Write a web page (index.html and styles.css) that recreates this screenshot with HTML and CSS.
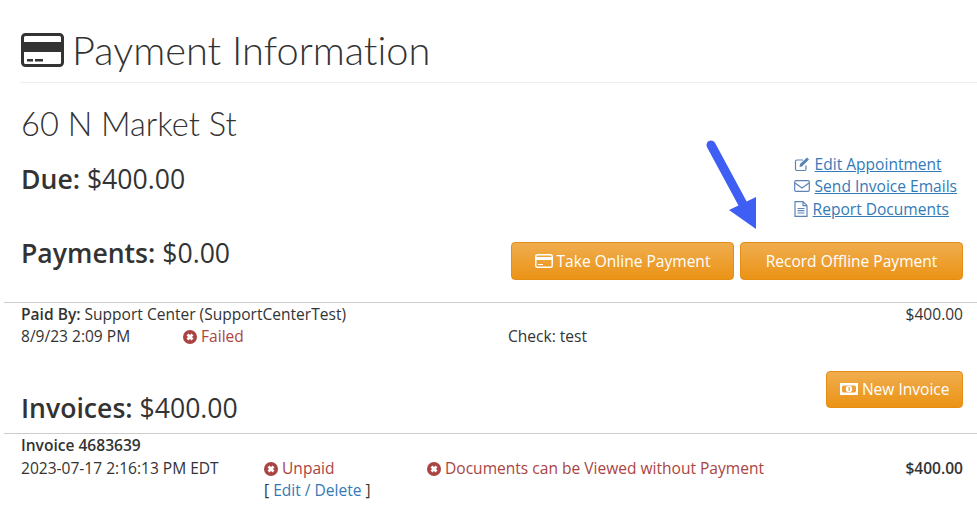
FILE: index.html
```html
<!DOCTYPE html>
<html lang="en">
<head>
    <meta charset="UTF-8">
    <title>Payment Information</title>
    <link rel="stylesheet" href="styles.css">
</head>
<body>
    <div class="page">
        <h1 class="page-title">
            <svg class="title-icon" width="43" height="34" viewBox="0 0 43 34">
                <rect x="1.500" y="1.500" width="40" height="31" rx="3" fill="#fff" stroke="#333" stroke-width="3"/>
                <rect x="2" y="9" width="39" height="10" fill="#333"/>
                <rect x="6" y="26" width="6" height="2.500" fill="#333"/>
                <rect x="14" y="26" width="8" height="2.500" fill="#333"/>
            </svg>
            Payment Information
        </h1>

        <h2 class="address">60 N Market St</h2>

        <div class="summary">
            <div class="totals">
                <h3 class="due"><b>Due:</b> $400.00</h3>
                <h3 class="payments"><b>Payments:</b> $0.00</h3>
            </div>
            <div class="actions">
                <ul class="links">
                    <li>
                        <svg class="link-icon" width="16" height="16" viewBox="0 0 16 16">
                            <path d="M12 9.500V13a1.500 1.500 0 0 1-1.500 1.500H3A1.500 1.500 0 0 1 1.500 13V5.500A1.500 1.500 0 0 1 3 4h6" fill="none" stroke="#5b84b5" stroke-width="1.200"/>
                            <path d="M6 8l7-6.500 2 2L8 10.500l-2.500.5z" fill="#5b84b5"/>
                        </svg>
                        <a href="#">Edit Appointment</a>
                    </li>
                    <li>
                        <svg class="link-icon" width="16" height="16" viewBox="0 0 16 16">
                            <rect x="0.700" y="2.700" width="14.600" height="10.600" rx="1.300" fill="none" stroke="#5b84b5" stroke-width="1.200"/>
                            <path d="M1 5l7 5 7-5" fill="none" stroke="#5b84b5" stroke-width="1.200"/>
                        </svg>
                        <a href="#">Send Invoice Emails</a>
                    </li>
                    <li class="tight">
                        <svg class="link-icon" width="14" height="16" viewBox="0 0 14 16">
                            <path d="M1 .7h8l4 4v10.600H1z M9 .7v4h4" fill="none" stroke="#5b84b5" stroke-width="1.200"/>
                            <path d="M3.500 7.500h7M3.500 9.700h7M3.500 12h7" fill="none" stroke="#5b84b5" stroke-width="1.200"/>
                        </svg>
                        <a href="#">Report Documents</a>
                    </li>
                </ul>
                <div class="buttons">
                    <button class="btn wide">
                        <svg class="btn-icon" width="18" height="14" viewBox="0 0 18 14">
                            <rect x="0.800" y="0.800" width="16.400" height="12.400" rx="1.500" fill="none" stroke="#fff" stroke-width="1.500"/>
                            <rect x="1" y="3" width="16" height="3" fill="#fff"/>
                            <rect x="3" y="10" width="5" height="1" fill="#fff"/>
                        </svg>
                        Take Online Payment
                    </button>
                    <button class="btn wide">Record Offline Payment</button>
                </div>
            </div>
        </div>

        <section class="record payment-record">
            <div class="row">
                <span><b>Paid By:</b> Support Center (SupportCenterTest)</span>
                <span>$400.00</span>
            </div>
            <div class="row">
                <span class="col-date">8/9/23 2:09 PM</span>
                <span class="col-status failed">
                    <svg class="x-icon" width="14" height="14" viewBox="0 0 14 14"><circle cx="7" cy="7" r="7" fill="#a94442"/><path d="M4.500 4.500l5 5M9.500 4.500l-5 5" stroke="#fff" stroke-width="2.800"/></svg>
                    Failed
                </span>
                <span class="col-note">Check: test</span>
            </div>
        </section>

        <div class="invoice-head">
            <h3 class="invoices"><b>Invoices:</b> $400.00</h3>
            <button class="btn short">
                <svg class="btn-icon" width="18" height="12" viewBox="0 0 18 12">
                    <path d="M0 0h18v12H0z M3 2.500a1 1 0 0 1-1 1v5a1 1 0 0 1 1 1h12a1 1 0 0 1 1-1v-5a1 1 0 0 1-1-1z" fill="#fff" fill-rule="evenodd"/>
                    <circle cx="9" cy="6" r="3.200" fill="#fff"/>
                    <rect x="8.500" y="4" width="1.200" height="4" fill="#ec9a2c"/>
                </svg>
                New Invoice
            </button>
        </div>

        <section class="record invoice-record">
            <div class="row"><b>Invoice 4683639</b></div>
            <div class="row invoice-line">
                <span class="inv-date">2023-07-17 2:16:13 PM EDT</span>
                <div class="inv-status">
                    <span class="failed">
                        <svg class="x-icon" width="14" height="14" viewBox="0 0 14 14"><circle cx="7" cy="7" r="7" fill="#a94442"/><path d="M4.500 4.500l5 5M9.500 4.500l-5 5" stroke="#fff" stroke-width="2.800"/></svg>
                        Unpaid
                    </span>
                    <span>[ <a class="plain" href="#">Edit / Delete</a> ]</span>
                </div>
                <span class="inv-docs failed">
                    <svg class="x-icon" width="14" height="14" viewBox="0 0 14 14"><circle cx="7" cy="7" r="7" fill="#a94442"/><path d="M4.500 4.500l5 5M9.500 4.500l-5 5" stroke="#fff" stroke-width="2.800"/></svg>
                    Documents can be Viewed without Payment
                </span>
                <b class="inv-total">$400.00</b>
            </div>
        </section>

        <!-- Pfeil aus dem Screenshot -->
        <svg class="arrow" width="60" height="100" viewBox="0 0 60 100">
            <path d="M7 10L41 73" stroke="#3f5ef3" stroke-width="9" stroke-linecap="round"/>
            <path d="M52 62L25 75L52 94z" fill="#3f5ef3"/>
        </svg>
    </div>
</body>
</html>
```

FILE: styles.css
```css
* {
    box-sizing: border-box;
}
html, body {
    margin: 0;
    height: 507px;
    overflow: hidden;
}
body {
    background-color: #fff;
    color: #333;
    font-family: "Open Sans", sans-serif;
    font-size: 15.560px;
    line-height: 22px;
}
.page {
    position: relative;
    height: 507px;
    padding-left: 4px;
    overflow: hidden;
}
.page-title {
    display: flex;
    align-items: center;
    gap: 8px;
    height: 62px;
    margin: 21px 0 0 16px;
    padding-bottom: 4px;
    border-bottom: 1px solid #eee;
    font-family: Lato, sans-serif;
    font-size: 39.800px;
    font-weight: 300;
    line-height: 44px;
    font-variant-ligatures: none;
}
.title-icon {
    flex: none;
    margin-left: 1px;
}
.address {
    margin: 21px 0 0 17px;
    font-family: Lato, sans-serif;
    font-size: 32.600px;
    font-weight: 300;
    line-height: 40px;
}
.summary {
    display: flex;
    justify-content: space-between;
    height: 158px;
    padding-left: 17px;
    padding-right: 14px;
}
.totals h3, .invoices {
    margin: 0;
    font-size: 26.600px;
    font-weight: 400;
    line-height: 32px;
}
.totals b, .invoices b {
    font-weight: 600;
}
.due {
    padding-top: 19px;
}
.payments {
    padding-top: 42px;
}
.actions {
    display: flex;
    flex-direction: column;
    align-items: flex-end;
}
.links {
    align-self: flex-end;
    margin: 8.700px 6px 0 0;
    padding: 0;
    list-style: none;
}
.links li {
    display: flex;
    align-items: center;
    gap: 5px;
    height: 22.500px;
}
.links a {
    color: #337ab7;
}
.link-icon {
    flex: none;
}
.buttons {
    display: flex;
    gap: 6px;
    margin-top: 21.800px;
}
.btn {
    display: inline-flex;
    align-items: center;
    justify-content: center;
    gap: 4px;
    height: 38px;
    padding: 0 13px;
    border: 1px solid #e38d13;
    border-radius: 4px;
    background-image: linear-gradient(#f0ad4e, #eb9316);
    color: #fff;
    font-family: "Open Sans", sans-serif;
    font-size: 15.560px;
}
.btn.wide {
    width: 223px;
}
.btn.short {
    height: 37px;
    padding: 0 12.500px 1px;
}
.record {
    border-top: 1px solid #ccc;
    padding: 0 14px 0 17px;
}
.row {
    display: flex;
    justify-content: space-between;
}
.payment-record .row + .row {
    justify-content: flex-start;
}
b {
    font-weight: 600;
}
.col-date {
    width: 162px;
}
.col-status {
    width: 325px;
}
.failed {
    color: #a94442;
}
.x-icon {
    vertical-align: -2px;
}
.invoice-head {
    display: flex;
    justify-content: space-between;
    align-items: flex-end;
    height: 86px;
    padding: 0 14px 0 17px;
}
.invoice-head .invoices {
    padding-bottom: 9px;
}
.invoice-head .btn {
    margin-bottom: 25px;
}
.invoice-line {
    justify-content: flex-start;
    margin-top: 1px;
}
.inv-date {
    width: 243px;
}
.inv-status {
    display: flex;
    flex-direction: column;
    width: 163px;
}
.inv-docs {
    flex: 1;
}
a.plain {
    color: #337ab7;
    text-decoration: none;
}
.arrow {
    position: absolute;
    left: 704px;
    top: 135px;
}
```
